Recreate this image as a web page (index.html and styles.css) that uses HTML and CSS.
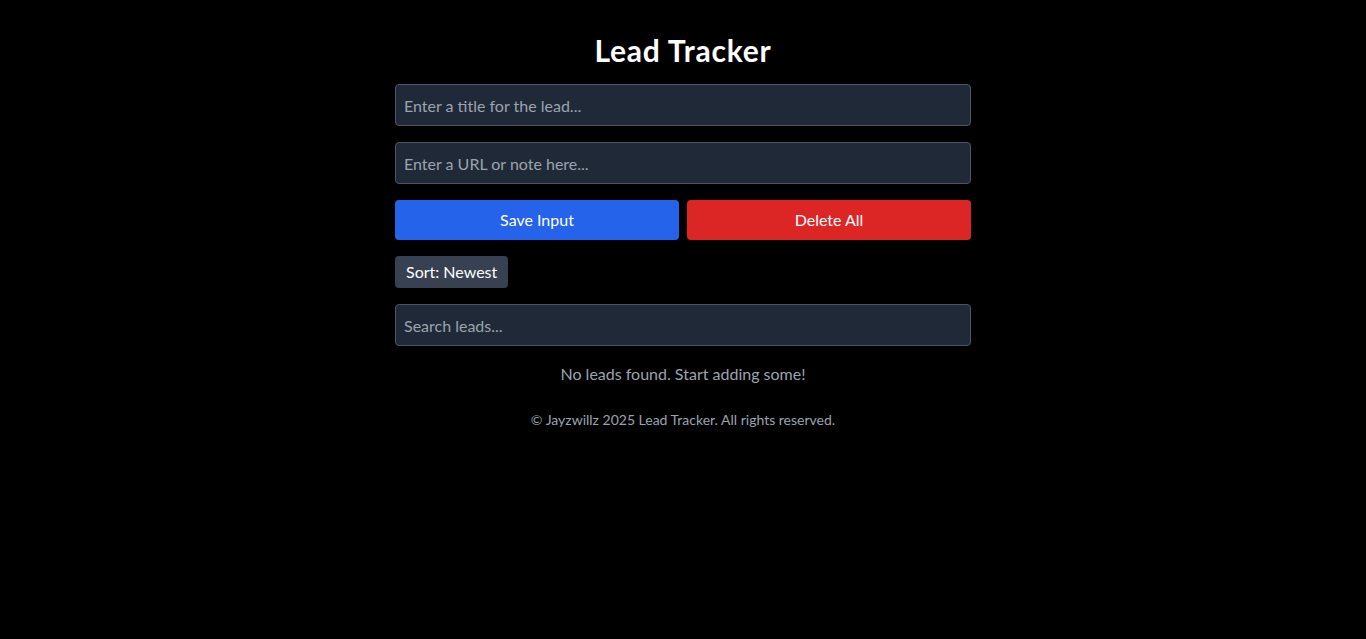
FILE: index.html
```html
<!DOCTYPE html>
<html lang="en">
<head>
<meta charset="utf-8">
<title>Lead Tracker</title>
<link rel="stylesheet" href="styles.css">
</head>
<body>
<main class="container">
  <h1 class="title">Lead Tracker</h1>
  <input class="field" type="text" placeholder="Enter a title for the lead...">
  <input class="field" type="text" placeholder="Enter a URL or note here...">
  <div class="actions">
    <button class="btn btn-save">Save Input</button>
    <button class="btn btn-delete">Delete All</button>
  </div>
  <div class="sort-row">
    <button class="btn-sort">Sort: Newest</button>
  </div>
  <input class="field" type="text" placeholder="Search leads...">
  <p class="empty">No leads found. Start adding some!</p>
  <footer class="footer">© Jayzwillz 2025 Lead Tracker. All rights reserved.</footer>
</main>
</body>
</html>
```

FILE: styles.css
```css
* { box-sizing: border-box; }
html, body { margin: 0; padding: 0; background: #000; }
body {
  font-family: "Lato", "Noto Sans", "Liberation Sans", sans-serif;
  color: #fff;
}
.container {
  width: 576px;
  margin: 0 auto;
  padding-top: 32px;
  display: flex;
  flex-direction: column;
}
.title {
  margin: 0 0 16px;
  font-size: 30px;
  line-height: 36px;
  font-weight: 700;
  letter-spacing: 0.8px;
  text-align: center;
}
.field {
  display: block;
  width: 100%;
  height: 42px;
  padding: 8px;
  margin: 0 0 16px;
  background: #1f2937;
  border: 1px solid #4b5563;
  border-radius: 4px;
  color: #fff;
  font: inherit;
  font-size: 16px;
  line-height: 24px;
  outline: none;
}
.field::placeholder { color: #9ca3af; }
.actions {
  display: flex;
  gap: 8px;
  margin-bottom: 16px;
}
.btn {
  flex: 1;
  height: 40px;
  border: 0;
  border-radius: 4px;
  color: #fff;
  font: inherit;
  font-size: 16px;
  line-height: 24px;
  cursor: pointer;
}
.btn-save { background: #2563eb; }
.btn-delete { background: #dc2626; }
.sort-row {
  display: flex;
  margin-bottom: 16px;
}
.btn-sort {
  height: 32px;
  padding: 4px 11px;
  border: 0;
  border-radius: 4px;
  background: #374151;
  color: #fff;
  font: inherit;
  font-size: 16px;
  line-height: 24px;
}
.empty {
  margin: 0;
  text-align: center;
  color: #9ca3af;
  font-size: 16px;
  line-height: 24px;
}
.footer {
  margin-top: 24px;
  text-align: center;
  color: #9ca3af;
  font-size: 14px;
  line-height: 20px;
}
```
